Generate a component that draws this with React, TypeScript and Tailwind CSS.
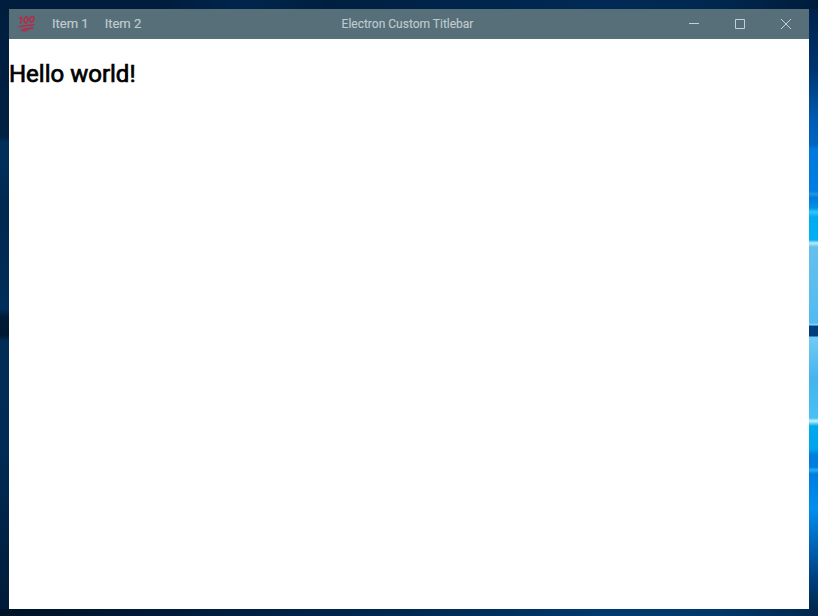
import React from "react";

function HundredIcon() {
  return (
    <svg className="size-[18px] shrink-0" viewBox="0 0 18 18" fill="none" stroke="#b62a47" strokeLinecap="round" strokeLinejoin="round">
      <g strokeWidth="1.5">
        <path d="M1.7 3.2 3.7 2.2 2.7 8.2" />
        <ellipse cx="8" cy="4.8" rx="1.8" ry="3" transform="rotate(16 8 4.8)" />
        <ellipse cx="13.8" cy="4.3" rx="1.8" ry="3" transform="rotate(16 13.8 4.3)" />
      </g>
      <path d="M1.6 11.7C6.3 10.5 11 9.9 15.8 10" strokeWidth="1.6" />
      <path d="M3.6 15.2C7 13.9 10.5 13.2 14.4 13.2" strokeWidth="1.8" />
      <path d="M5.6 16.4 10 15.4" strokeWidth="1" />
    </svg>
  );
}

function WindowControls() {
  return (
    <div className="flex h-full text-[#c5d0d4]">
      <button aria-label="Minimize" className="flex h-full w-[46px] items-center justify-center">
        <svg width="10" height="10" fill="currentColor"><path d="M0 4h10v1H0z" /></svg>
      </button>
      <button aria-label="Maximize" className="flex h-full w-[46px] items-center justify-center">
        <svg width="10" height="10" fill="none" stroke="currentColor"><path d="M.5.5h9v9h-9z" /></svg>
      </button>
      <button aria-label="Close" className="flex h-full w-[46px] items-center justify-center">
        <svg width="10" height="10" fill="none" stroke="currentColor"><path d="m0 0 10 10M10 0 0 10" /></svg>
      </button>
    </div>
  );
}

export default function App() {
  return (
    <div className="grid h-[616px] w-[818px] grid-cols-[9px_800px_9px] grid-rows-[9px_600px_7px] overflow-hidden bg-[#00244b] font-[Roboto,sans-serif]">
      <div className="col-span-3 bg-[linear-gradient(90deg,#001d3e_0%,#001d3e_20%,#00254c_30%,#001f40_40%,#00244a_55%,#002a55_75%,#00284f_87%,#001c3b_100%)]" />
      <div className="bg-[linear-gradient(180deg,#001d3d_0px,#002143_128px,#002f5d_134px,#002850_200px,#002d59_300px,#001b38_308px,#001831_326px,#002c55_332px,#002b55_440px,#001b38_600px)]" />
      <main className="flex flex-col overflow-hidden bg-white">
        <header className="grid h-[30px] shrink-0 grid-cols-[1fr_auto_1fr] items-center bg-[#566f79] text-[#c0cacf]">
          <div className="flex h-full items-center pl-[9px]">
            <HundredIcon />
            <nav className="ml-2 flex text-[13px] [-webkit-text-stroke:0.2px_currentColor]">
              <span className="px-2">Item 1</span>
              <span className="px-2">Item 2</span>
            </nav>
          </div>
          <span className="mr-[3px] text-[12px] [-webkit-text-stroke:0.15px_currentColor]">Electron Custom Titlebar</span>
          <div className="flex h-full justify-end"><WindowControls /></div>
        </header>
        <h1 className="mt-[20px] text-[24px] leading-[30px] font-normal text-black [-webkit-text-stroke:0.7px_currentColor]">Hello world!</h1>
      </main>
      <div className="bg-[linear-gradient(180deg,#00214b_0px,#00346f_60px,#005ab2_110px,#0064c3_136px,#0079dd_140px,#007ee4_182px,#1f96e6_185px,#0079dc_189px,#0093e7_199px,#31c6fb_203px,#00aaf2_208px,#00b0f4_231px,#b5ecff_234px,#65bfee_238px,#52baef_314px,#8bdcff_316px,#003d7c_317px,#003d7c_327px,#71caf5_328px,#45b4ec_370px,#49c0f4_409px,#c5f4ff_412px,#00a9ec_417px,#00a4ed_440px,#007ddf_446px,#007ddf_458px,#23aff5_461px,#007bdf_465px,#008eef_500px,#006bc2_530px,#003f7d_570px,#00284f_600px)]" />
      <div className="col-span-3 bg-[linear-gradient(90deg,#001326_0%,#001a38_20%,#00284f_50%,#003a6d_75%,#003868_88%,#00274e_100%)]" />
    </div>
  );
}
